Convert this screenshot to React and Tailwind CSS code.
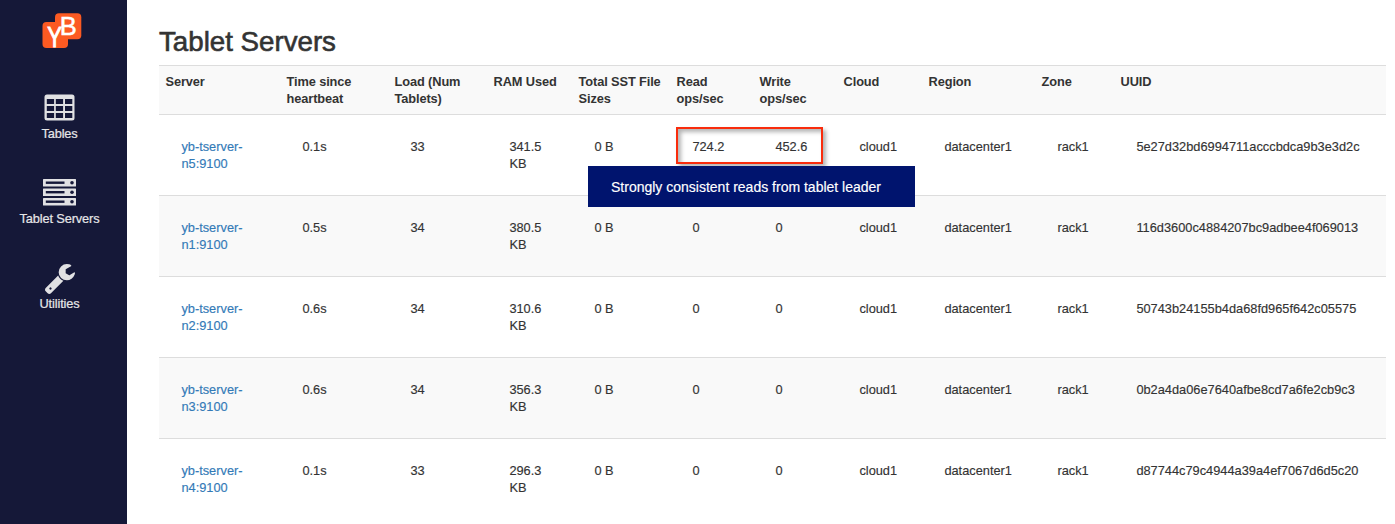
const rows = [
  ['n5', '0.1s', '33', '341.5 KB', '724.2', '452.6', '5e27d32bd6994711acccbdca9b3e3d2c'],
  ['n1', '0.5s', '34', '380.5 KB', '0', '0', '116d3600c4884207bc9adbee4f069013'],
  ['n2', '0.6s', '34', '310.6 KB', '0', '0', '50743b24155b4da68fd965f642c05575'],
  ['n3', '0.6s', '34', '356.3 KB', '0', '0', '0b2a4da06e7640afbe8cd7a6fe2cb9c3'],
  ['n4', '0.1s', '33', '296.3 KB', '0', '0', 'd87744c79c4944a39a4ef7067d6d5c20'],
];

const headers = [
  'Server', 'Time since heartbeat', 'Load (Num Tablets)', 'RAM Used', 'Total SST File Sizes',
  'Read ops/sec', 'Write ops/sec', 'Cloud', 'Region', 'Zone', 'UUID',
];

const columns = 'grid grid-cols-[121px_108px_99px_85px_98px_83px_84px_85px_113px_79px_272px]';

function Logo() {
  return (
    <svg viewBox="0 0 40 36" className="h-9 w-10 overflow-visible" aria-label="YB">
      <rect x="0.5" y="9" width="25.5" height="26" rx="4" fill="#fc5a22" />
      <rect x="13" y="0.3" width="26.3" height="26" rx="4" fill="#fc5a22" />
      <g fill="#fff" stroke="#fff" strokeWidth="0.5" fontFamily="Liberation Sans, Arial, sans-serif">
        <text transform="translate(5.2 34) scale(0.76 1)" strokeWidth="1" fontSize="29">Y</text>
        <text transform="translate(17.7 21.7)" fontSize="25.5">B</text>
      </g>
    </svg>
  );
}

function TableIcon() {
  return (
    <svg viewBox="0 0 31 27" className="h-[27px] w-[31px]">
      <rect x="0.5" y="0.5" width="30" height="26" rx="2.5" fill="#e1e1e3" />
      {[5, 12, 19].map((y) => [2.8, 11.8, 21].map((x) => (
        <rect key={`${x}-${y}`} x={x} y={y} width="7.3" height="5" fill="#151838" />
      )))}
    </svg>
  );
}

function ServersIcon() {
  return (
    <svg viewBox="0 0 33 27" className="h-[27px] w-[33px]">
      {[0, 9.5, 19].map((y) => (
        <g key={y}>
          <rect x="0" y={y} width="33" height="7.5" rx="0.5" fill="#e1e1e3" />
          <rect x="2.8" y={y + 2.5} width="18.7" height="2.4" fill="#151838" />
          <circle cx="29" cy={y + 3.7} r="1.8" fill="#151838" />
        </g>
      ))}
    </svg>
  );
}

function WrenchIcon() {
  return (
    <svg viewBox="85 128 1641 1643" className="mt-[2px] h-[30px] w-[30px]" fill="#e1e1e3">
      <path d="M448 1472q0-26-19-45t-45-19-45 19-19 45 19 45 45 19 45-19 19-45zm644-420l-682 682q-37 37-90 37-52 0-91-37l-106-108q-38-36-38-90 0-53 38-91l681-681q39 98 114.5 173.5t173.5 114.5zm634-435q0 39-23 106-47 134-164.5 217.5t-258.5 83.5q-185 0-316.5-131.5t-131.5-316.5 131.5-316.5 316.5-131.5q58 0 121.5 16.5t107.5 46.5q16 11 16 28t-16 28l-293 169v224l193 107q5-3 79-48.5t135.5-81 70.5-35.5q15 0 23.5 10t8.5 25z" />
    </svg>
  );
}

function NavItem({ icon, label }) {
  return (
    <a className="flex h-[85px] flex-col items-center">
      <span className="flex h-[31px] items-center">{icon}</span>
      <span className="mt-[2px] text-[12.8px] leading-[17px] tracking-[-0.14px] text-[#e6e6e8] [-webkit-text-stroke:0.2px]">{label}</span>
    </a>
  );
}

function Row({ row, index }) {
  const [node, heartbeat, load, ram, read, write, uuid] = row;
  const cells = [heartbeat, load, ram, '0 B', read, write, 'cloud1', 'datacenter1', 'rack1', uuid];
  return (
    <div className={`${columns} h-[81px] border-t border-[#ddd] ${index % 2 ? 'bg-[#f9f9f9]' : 'bg-white'}`}>
      <div className="py-[23px] pl-[22.4px] text-[#337ab7]">yb-tserver-<br />{node}:9100</div>
      {cells.map((cell, i) => (
        <div key={i} className="py-[23px] pr-5 pl-[22.4px]">{cell}</div>
      ))}
    </div>
  );
}

export default function App() {
  return (
    <div className="flex h-[524px] w-[1395px] overflow-hidden bg-white font-['Liberation_Sans',Arial,sans-serif] text-[12.8px] leading-[17px] text-[#333] [-webkit-text-stroke:0.15px]">
      <nav className="flex w-[127px] shrink-0 flex-col bg-[#151838] pt-[13px] pr-[8px]">
        <div className="flex h-[79px] justify-center pl-[4px]"><Logo /></div>
        <NavItem icon={<TableIcon />} label="Tables" />
        <NavItem icon={<ServersIcon />} label="Tablet Servers" />
        <NavItem icon={<WrenchIcon />} label="Utilities" />
      </nav>
      <main className="ml-8 w-[1227px] pt-[25px]">
        <h1 className="h-10 text-[27.7px] leading-[34px] font-medium [-webkit-text-stroke:0.6px]">Tablet Servers</h1>
        <div className="relative">
          <div className={`${columns} h-[49px] border-t border-[#ddd] bg-[#f9f9f9] font-bold tracking-[-0.12px] [-webkit-text-stroke:0px]`}>
            {headers.map((header) => (
              <div key={header} className="py-[7px] pr-1 pl-[6.6px]">{header}</div>
            ))}
          </div>
          {rows.map((row, i) => <Row key={row[0]} row={row} index={i} />)}
          <div className="absolute top-[62px] left-[517px] h-[37px] w-[147px] border-2 border-[#f92c0c] shadow-[3px_3px_4px_rgba(0,0,0,0.3),inset_3px_3px_4px_rgba(0,0,0,0.3)]" />
          <div className="absolute top-[101px] left-[429px] h-[40.5px] w-[327px] bg-[#00146e] pl-[23px] text-[14px] leading-[42px] text-white">
            Strongly consistent reads from tablet leader
          </div>
        </div>
      </main>
    </div>
  );
}
